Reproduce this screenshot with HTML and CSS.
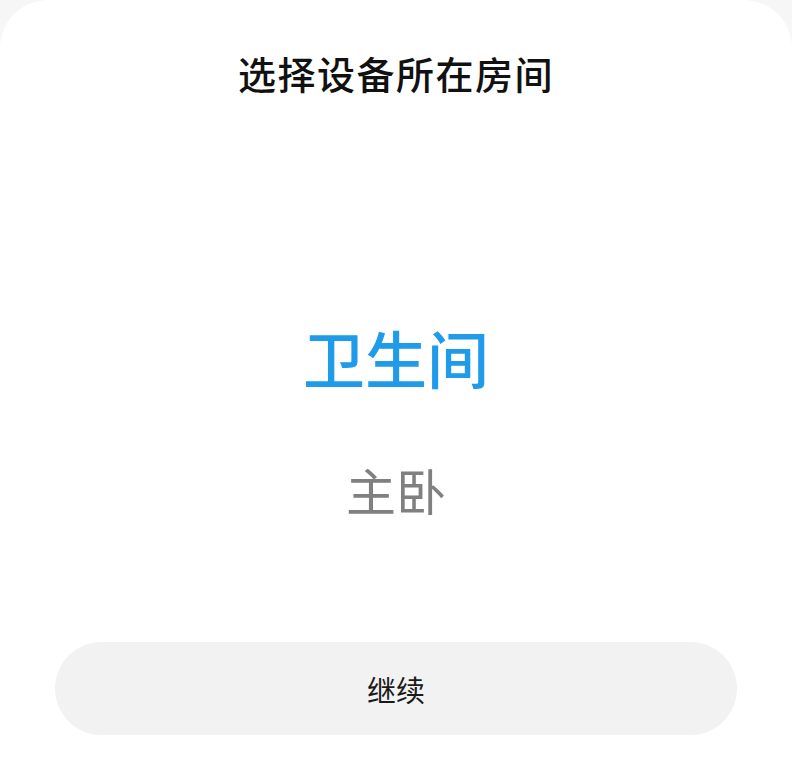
FILE: index.html
```html
<!DOCTYPE html>
<html>
  <head>
    <meta charset="utf-8" />
    <title>选择设备所在房间</title>
    <link rel="stylesheet" href="styles.css">
  </head>
  <body>
    <div class="sheet">
      <h1 class="title">选择设备所在房间</h1>
      <div class="picker">
        <div class="room room-active">卫生间</div>
        <div class="room">主卧</div>
      </div>
      <button class="next-btn">继续</button>
    </div>
  </body>
</html>
```

FILE: styles.css
```css
html,
body {
  margin: 0;
  padding: 0;
}

body {
  background-color: #f6f6f6;
  font-family: "Noto Sans CJK SC", "Noto Sans", sans-serif;
}

.sheet {
  height: 783px;
  box-sizing: border-box;
  background-color: #fff;
  border-radius: 48px 48px 0 0;
  padding-top: 49px;
  display: flex;
  flex-direction: column;
  align-items: center;
}

.title {
  margin: 0;
  font-size: 38px;
  line-height: 48px;
  font-weight: 500;
  color: #111;
  letter-spacing: 1.5px;
}

.picker {
  margin-top: 220px;
  display: flex;
  flex-direction: column;
  align-items: center;
}

.room {
  font-size: 50px;
  line-height: 64px;
  color: #808080;
  margin-top: 60px;
}

.room-active {
  font-size: 62px;
  line-height: 80px;
  font-weight: 500;
  color: #1f9bea;
  margin-top: 0;
}

.next-btn {
  margin-top: 121px;
  width: 682px;
  height: 93px;
  border: none;
  border-radius: 47px;
  background-color: #f2f2f2;
  font-family: inherit;
  font-size: 29px;
  color: #1a1a1a;
  cursor: pointer;
}
```
